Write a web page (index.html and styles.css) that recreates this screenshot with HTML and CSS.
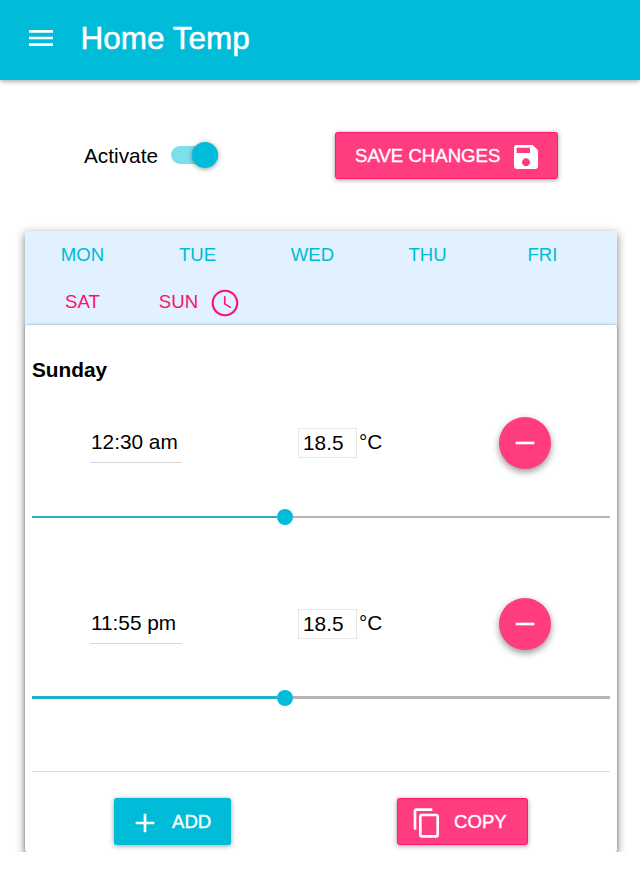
FILE: index.html
```html
<!DOCTYPE html>
<html lang="en">
<head>
<meta charset="utf-8">
<title>Home Temp</title>
<link rel="stylesheet" href="styles.css">
</head>
<body>
<header class="app-bar">
  <svg class="icon" viewBox="0 0 24 24"><path d="M3 18h18v-2H3v2zm0-5h18v-2H3v2zm0-7v2h18V6H3z"/></svg>
  <h1 class="title">Home Temp</h1>
</header>
<main>
  <section class="controls">
    <span class="activate">Activate</span>
    <span class="toggle"><span class="knob"></span></span>
    <button class="btn pink save"><span class="label">SAVE CHANGES</span><svg class="icon" viewBox="0 0 24 24"><path d="M17 3H5c-1.11 0-2 .9-2 2v14c0 1.1.89 2 2 2h14c1.1 0 2-.9 2-2V7l-4-4zm-5 16c-1.66 0-3-1.34-3-3s1.34-3 3-3 3 1.34 3 3-1.34 3-3 3zm3-10H5V5h10v4z"/></svg></button>
  </section>
  <section class="card">
    <nav class="days">
      <span class="day">MON</span><span class="day">TUE</span><span class="day">WED</span><span class="day">THU</span><span class="day">FRI</span>
      <span class="day weekend">SAT</span>
      <span class="day weekend"><span>SUN</span><svg class="icon clock" viewBox="0 0 24 24"><path d="M11.99 2C6.47 2 2 6.48 2 12s4.47 10 9.99 10C17.52 22 22 17.52 22 12S17.52 2 11.99 2zM12 20.4c-4.64 0-8.4-3.76-8.4-8.4s3.76-8.4 8.4-8.4 8.4 3.76 8.4 8.4-3.76 8.4-8.4 8.4z"/><path d="M12.4 7h-1.2v6l4.9 3 .65-1.05-4.35-2.65z"/></svg></span>
    </nav>
    <div class="panel">
      <h2 class="day-title">Sunday</h2>
      <div class="slot">
        <div class="fields">
          <span class="time">12:30 am</span>
          <span class="temp">18.5</span><span class="unit">°C</span>
          <button class="fab"><svg class="icon" viewBox="0 0 24 24"><path d="M19 13H5v-2h14v2z"/></svg></button>
        </div>
        <div class="slider"><span class="filled"></span><span class="handle"></span><span class="rest"></span></div>
      </div>
      <div class="slot">
        <div class="fields">
          <span class="time">11:55 pm</span>
          <span class="temp">18.5</span><span class="unit">°C</span>
          <button class="fab"><svg class="icon" viewBox="0 0 24 24"><path d="M19 13H5v-2h14v2z"/></svg></button>
        </div>
        <div class="slider"><span class="filled"></span><span class="handle"></span><span class="rest"></span></div>
      </div>
      <footer class="actions">
        <button class="btn cyan add"><svg class="icon" viewBox="0 0 24 24"><path d="M19 13h-6v6h-2v-6H5v-2h6V5h2v6h6v2z"/></svg><span class="label">ADD</span></button>
        <button class="btn pink copy"><svg class="icon" viewBox="0 0 24 24"><path d="M16 1H4c-1.1 0-2 .9-2 2v14h2V3h12V1zm3 4H8c-1.1 0-2 .9-2 2v14c0 1.1.9 2 2 2h11c1.1 0 2-.9 2-2V7c0-1.1-.9-2-2-2zm0 16H8V7h11v14z"/></svg><span class="label">COPY</span></button>
      </footer>
    </div>
  </section>
</main>
</body>
</html>
```

FILE: styles.css
```css
* { box-sizing: border-box; }

body {
  margin: 0;
  background: #fff;
  color: #000;
  font: 20.8px/26px "Liberation Sans", Arial, sans-serif;
}

button {
  border: 0;
  padding: 0;
  font: inherit;
  color: #fff;
}

.icon {
  display: block;
  flex: none;
  width: 32px;
  height: 32px;
  fill: currentColor;
}

.app-bar {
  display: flex;
  align-items: center;
  height: 79.5px;
  padding: 0 0 3px 24.5px;
  background: #00bcd9;
  color: #fff;
  box-shadow: 0 1px 5px rgba(0, 0, 0, .4);
}

.title {
  margin: 0 0 0 24px;
  font-size: 31.5px;
  line-height: 40px;
  font-weight: 400;
  -webkit-text-stroke: .5px currentColor;
}

.controls {
  display: flex;
  align-items: center;
  height: 47px;
  margin: 52.5px 0 52px 84px;
}

.toggle {
  display: flex;
  justify-content: flex-end;
  align-items: center;
  width: 47px;
  height: 18px;
  margin: -2px 0 0 13px;
  border-radius: 9px;
  background: #7fdeeb;
}

.knob {
  flex: none;
  width: 26px;
  height: 26px;
  border-radius: 50%;
  background: #00bcd9;
  box-shadow: 0 1px 5px rgba(0, 0, 0, .4);
}

.btn {
  display: flex;
  align-items: center;
  height: 47px;
  border-radius: 2.5px;
  font-size: 18.6px;
  box-shadow: 0 1px 5px rgba(0, 0, 0, .38);
}

.btn .label { -webkit-text-stroke: .35px currentColor; }

.pink { background: #ff3c7f; border: 1px solid #ff1a70; }
.cyan { background: #00bcd9; }

.save {
  width: 223px;
  margin-left: 117px;
  padding-left: 19px;
}

.save .icon { margin: 3px 0 0 10px; }

.card {
  width: 592px;
  height: 621px;
  margin-left: 25px;
  border-radius: 3px;
  box-shadow: 0 3px 9px 1px rgba(0, 0, 0, .42);
}

.days {
  display: grid;
  grid-template-columns: repeat(5, 115px);
  grid-auto-rows: 47px;
  height: 94px;
  border-radius: 3px 3px 0 0;
  background: #e1f1ff;
  color: #00bad6;
  font-size: 18.6px;
}

.day {
  display: flex;
  justify-content: center;
  align-items: center;
}

.weekend { color: #fc1070; }
.clock { margin: 3px -5px 0 11px; }

.panel {
  height: 527px;
  padding: 32px 7px 0;
  background: #fff;
  border-radius: 3px;
  box-shadow: 0 0 3px rgba(0, 0, 0, .35);
}

.day-title {
  margin: 0;
  font-size: 20.8px;
  line-height: 26px;
}

.slot {
  height: 180.5px;
  padding-top: 34px;
}

.fields {
  display: flex;
  align-items: center;
  height: 52px;
  padding-left: 58px;
}

.time {
  width: 92px;
  height: 42px;
  margin-top: -2px;
  padding-top: 8px;
  padding-left: 1px;
  border-bottom: 1px solid #d8d8d8;
  white-space: nowrap;
}

.temp {
  width: 59px;
  height: 30px;
  margin-left: 116px;
  padding-left: 4px;
  border: 1px solid #e6e6e6;
  line-height: 27px;
}

.unit { margin: -2px 0 0 2px; width: 24px; }

.fab {
  display: flex;
  justify-content: center;
  align-items: center;
  width: 52px;
  height: 52px;
  margin-left: 116px;
  border-radius: 50%;
  background: #ff3c7f;
  box-shadow: 0 3px 7px rgba(0, 0, 0, .42);
}

.slider {
  display: flex;
  align-items: center;
  height: 16px;
  margin-top: 40px;
}

.filled { width: 245px; height: 2.5px; background: #1fb3cb; }
.handle { width: 16px; height: 16px; border-radius: 50%; background: #00bcd9; }
.rest { flex: 1; height: 2.5px; background: #b5b5b5; }

.actions {
  display: flex;
  margin-top: 27px;
  padding: 26px 0 0 82px;
  border-top: 1px solid #dcdcdc;
}

.add { width: 117px; padding-left: 15px; }
.add .label { margin-left: 11px; }
.copy { width: 131px; margin-left: 166px; padding-left: 13px; }
.copy .label { margin-left: 11px; }
.actions .icon { margin-top: 2px; }
```
